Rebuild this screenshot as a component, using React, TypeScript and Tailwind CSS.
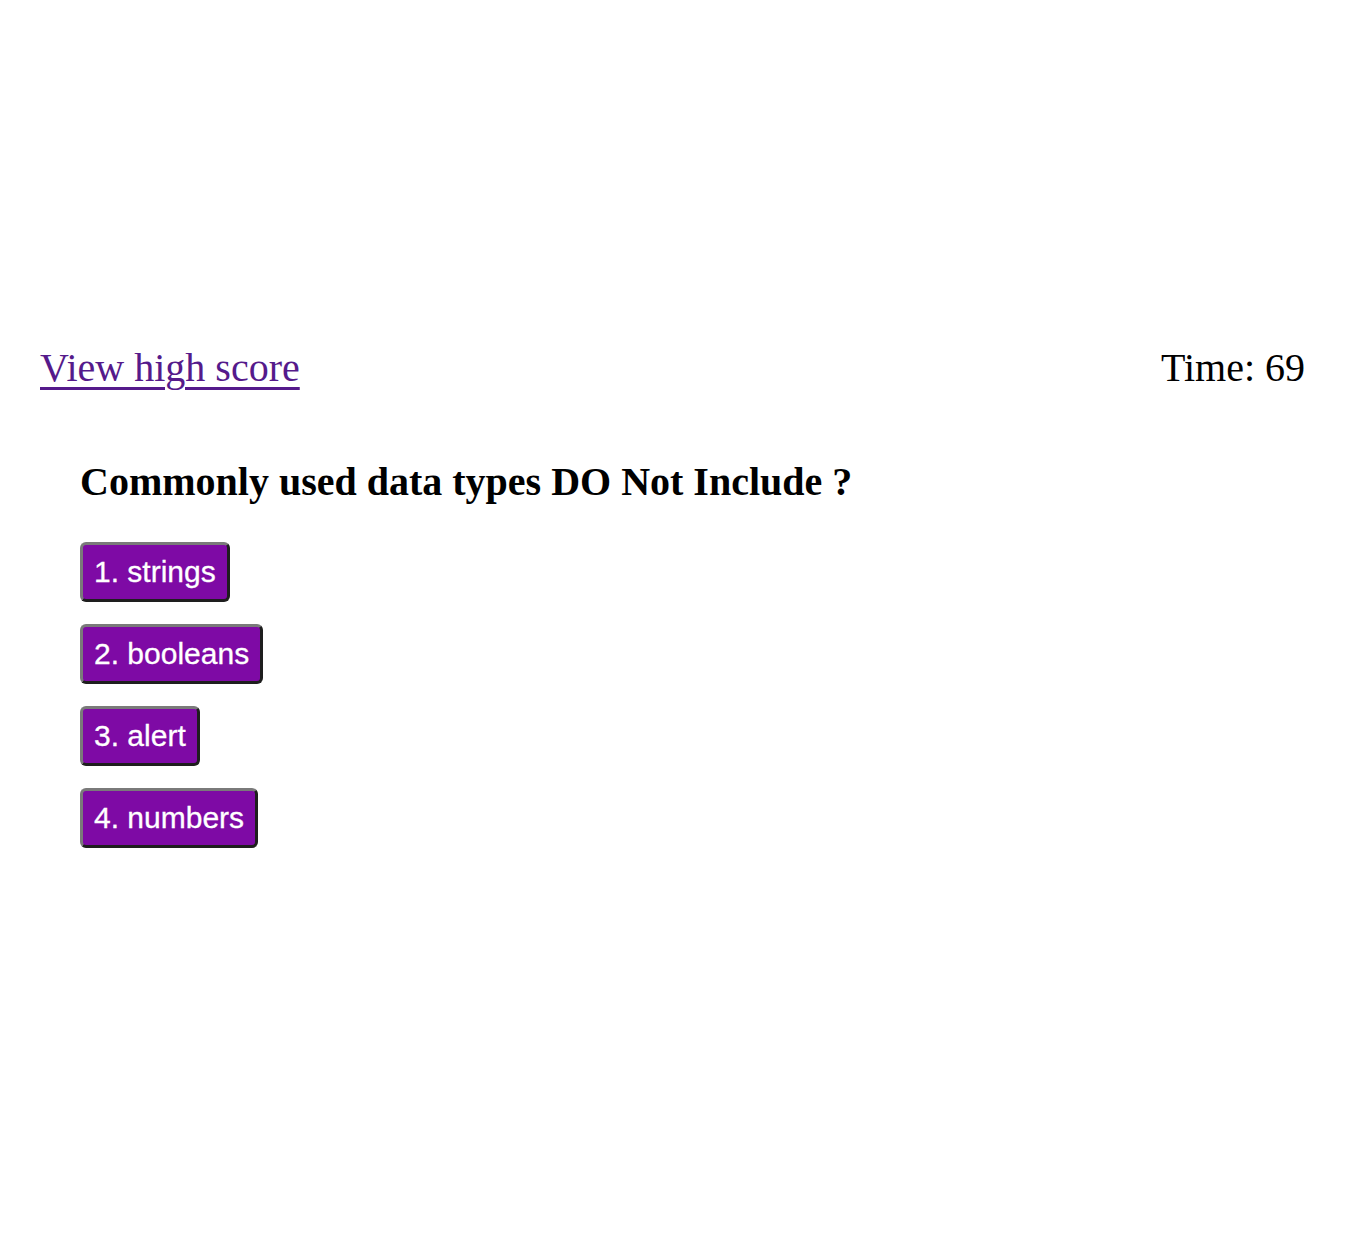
export default function App() {
  const answers = ["1. strings", "2. booleans", "3. alert", "4. numbers"];
  return (
    <div className="min-h-[1244px] bg-white pt-[345px] text-black" style={{ fontFamily: '"Liberation Serif", "Times New Roman", serif' }}>
      <header className="flex items-center justify-between pl-[40px] pr-[41px] text-[40px] leading-[46px]">
        <a href="#" className="text-[#551a8b] underline decoration-[3px] underline-offset-[6px]">View high score</a>
        <span>Time: 69</span>
      </header>
      <main className="pl-[80px] pt-[68px]">
        <h2 className="text-[40px] font-bold leading-[46px]">Commonly used data types DO Not Include ?</h2>
        <div className="mt-[37px] flex flex-col items-start gap-[22px]">
          {answers.map((a) => (
            <button
              key={a}
              className="h-[60px] rounded-[6px] border-[3px] border-t-[#7a7a7a] border-l-[#7a7a7a] border-b-[#1e1e1e] border-r-[#1e1e1e] bg-[#7e0aa5] px-[11px] text-[30px] leading-[34px] text-white [-webkit-text-stroke:0.3px_white]"
              style={{ fontFamily: '"Liberation Sans", Arial, sans-serif' }}
            >
              {a}
            </button>
          ))}
        </div>
      </main>
    </div>
  );
}
